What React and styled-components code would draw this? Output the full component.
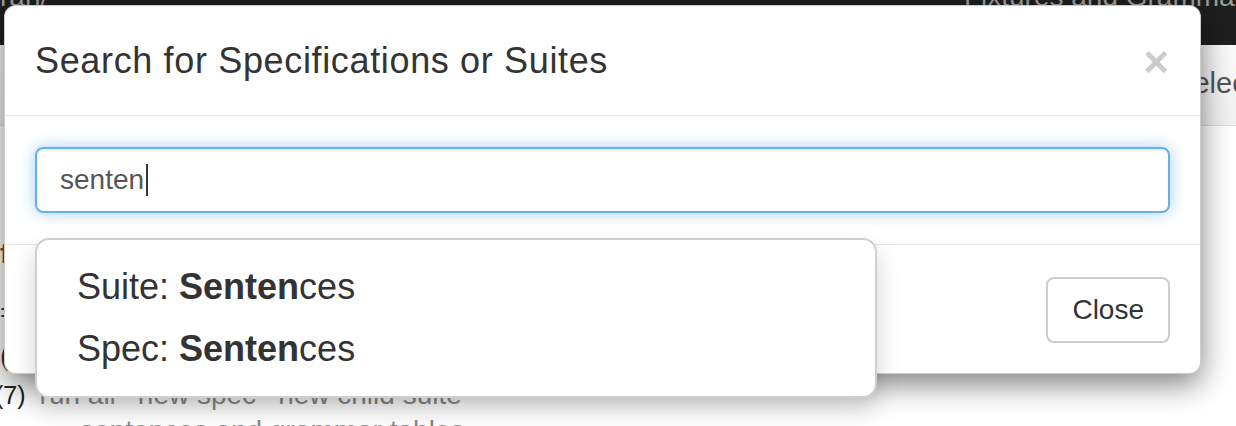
import React from "react";
import styled, { createGlobalStyle } from "styled-components";

const Global = createGlobalStyle`
  html, body { margin: 0; padding: 0; background: #fff; }
  body { font-family: "Liberation Sans", Arial, Helvetica, sans-serif; overflow: hidden; }
  * { box-sizing: border-box; }
`;

const Page = styled.div`
  position: relative;
  width: 1236px;
  height: 426px;
  overflow: hidden;
  background: #fff;
`;

const NavBar = styled.div`
  height: 45px;
  background: #1f1f1f;
  display: flex;
  justify-content: space-between;
  align-items: flex-start;
  overflow: hidden;
`;

const NavText = styled.span`
  font-size: 28px;
  line-height: 28px;
  margin-top: -17px;
  color: #9d9d9d;
  white-space: nowrap;
  margin-right: ${(p) => p.$right || "0"};
`;

const SubBar = styled.div`
  height: 81px;
  border-bottom: 1px solid #dcdcdc;
  background: linear-gradient(#fafafa, #f0f0f0);
  display: flex;
  justify-content: flex-end;
  align-items: center;
  overflow: hidden;
`;

const SubButton = styled.span`
  font-size: 29px;
  color: #555;
  white-space: nowrap;
  margin-right: -51px;
  margin-top: -4px;
`;

const Content = styled.div`
  display: flex;
  flex-direction: column;
`;

const Line = styled.div`
  margin-top: ${(p) => p.$top}px;
  height: 28px;
  line-height: 28px;
  font-size: 28px;
  color: ${(p) => p.$color || "#333"};
  font-weight: ${(p) => (p.$bold ? 700 : 400)};
  white-space: nowrap;
  display: flex;
  gap: 22px;
  padding-left: ${(p) => p.$indent || 0}px;
`;

const Count = styled.span`
  color: #222;
  font-size: 25px;
  margin-left: -5px;
  margin-right: -8px;
`;

const LinkText = styled.span`
  color: #8a8a8a;
`;

const Modal = styled.div`
  position: absolute;
  left: 4px;
  top: 5px;
  width: 1197px;
  height: 369px;
  background: #fff;
  border: 1px solid rgba(0, 0, 0, 0.2);
  border-radius: 12px;
  box-shadow: 0 10px 30px rgba(0, 0, 0, 0.5);
  display: flex;
  flex-direction: column;
`;

const ModalHeader = styled.div`
  padding: 30px;
  border-bottom: 1px solid #e5e5e5;
  display: flex;
  justify-content: space-between;
  align-items: flex-start;
`;

const Title = styled.h4`
  margin: 0;
  font-size: 36px;
  line-height: 49px;
  font-weight: 400;
  color: #333;
  letter-spacing: 0.65px;
`;

const CloseX = styled.span`
  font-size: 44px;
  font-weight: 700;
  line-height: 44px;
  color: #000;
  opacity: 0.2;
  margin-top: 4px;
  margin-right: 1px;
`;

const ModalBody = styled.div`
  position: relative;
  padding: 31px 30px;
  border-bottom: 1px solid #e5e5e5;
`;

const Field = styled.div`
  height: 66px;
  border: 2px solid #66afe9;
  border-radius: 8px;
  box-shadow: inset 0 2px 2px rgba(0, 0, 0, 0.075), 0 0 16px rgba(102, 175, 233, 0.6);
  padding: 0 23px;
  display: flex;
  align-items: center;
  font-size: 28px;
  color: #555;
`;

const Caret = styled.span`
  display: inline-block;
  width: 2px;
  height: 32px;
  background: #333;
  margin-left: 2px;
`;

const Dropdown = styled.ul`
  position: absolute;
  left: 30px;
  top: 122px;
  width: 842px;
  margin: 0;
  padding: 16px 0;
  list-style: none;
  background: #fff;
  border: 2px solid #cfcfcf;
  border-radius: 14px;
  box-shadow: 0 12px 24px rgba(0, 0, 0, 0.175);
  z-index: 2;
`;

const Item = styled.li`
  height: 62px;
  display: flex;
  align-items: center;
  padding-left: 40px;
  font-size: 36px;
  color: #333;
  white-space: pre;
`;

const Match = styled.b`
  font-weight: 700;
`;

const ModalFooter = styled.div`
  flex: 1;
  padding: 32px 30px 30px;
  display: flex;
  justify-content: flex-end;
  align-items: flex-start;
`;

const Button = styled.button`
  height: 66px;
  padding: 0 24px;
  border: 2px solid #ccc;
  border-radius: 8px;
  background: #fff;
  font-family: inherit;
  font-size: 28px;
  color: #333;
`;

const results = [
  { kind: "Suite", name: "Sentences" },
  { kind: "Spec", name: "Sentences" },
];

const query = "senten";

export default function App() {
  return (
    <>
      <Global />
      <Page>
        <NavBar>
          <NavText>ran/</NavText>
          <NavText $right="-22px">Fixtures and Grammars</NavText>
        </NavBar>
        <SubBar>
          <SubButton>Selected</SubButton>
        </SubBar>
        <Content>
          <Line $top={114} $color="#8b4a1c" $bold>fixtures</Line>
          <Line $top={31}>=</Line>
          <Line $top={15}>(</Line>
          <Line $top={11}>
            <Count>(7)</Count>
            <LinkText>run all</LinkText>
            <LinkText>new spec</LinkText>
            <LinkText>new child suite</LinkText>
          </Line>
          <Line $top={8} $indent={80} $color="#8a8a8a">sentences and grammar tables</Line>
        </Content>
        <Modal>
          <ModalHeader>
            <Title>Search for Specifications or Suites</Title>
            <CloseX>×</CloseX>
          </ModalHeader>
          <ModalBody>
            <Field>
              {query}
              <Caret />
            </Field>
            <Dropdown>
              {results.map((r, i) => {
                const rest = r.name.slice(query.length);
                const hit = r.name.slice(0, query.length);
                return (
                  <Item key={i}>
                    {r.kind}: <Match>{hit}</Match>
                    {rest}
                  </Item>
                );
              })}
            </Dropdown>
          </ModalBody>
          <ModalFooter>
            <Button>Close</Button>
          </ModalFooter>
        </Modal>
      </Page>
    </>
  );
}
